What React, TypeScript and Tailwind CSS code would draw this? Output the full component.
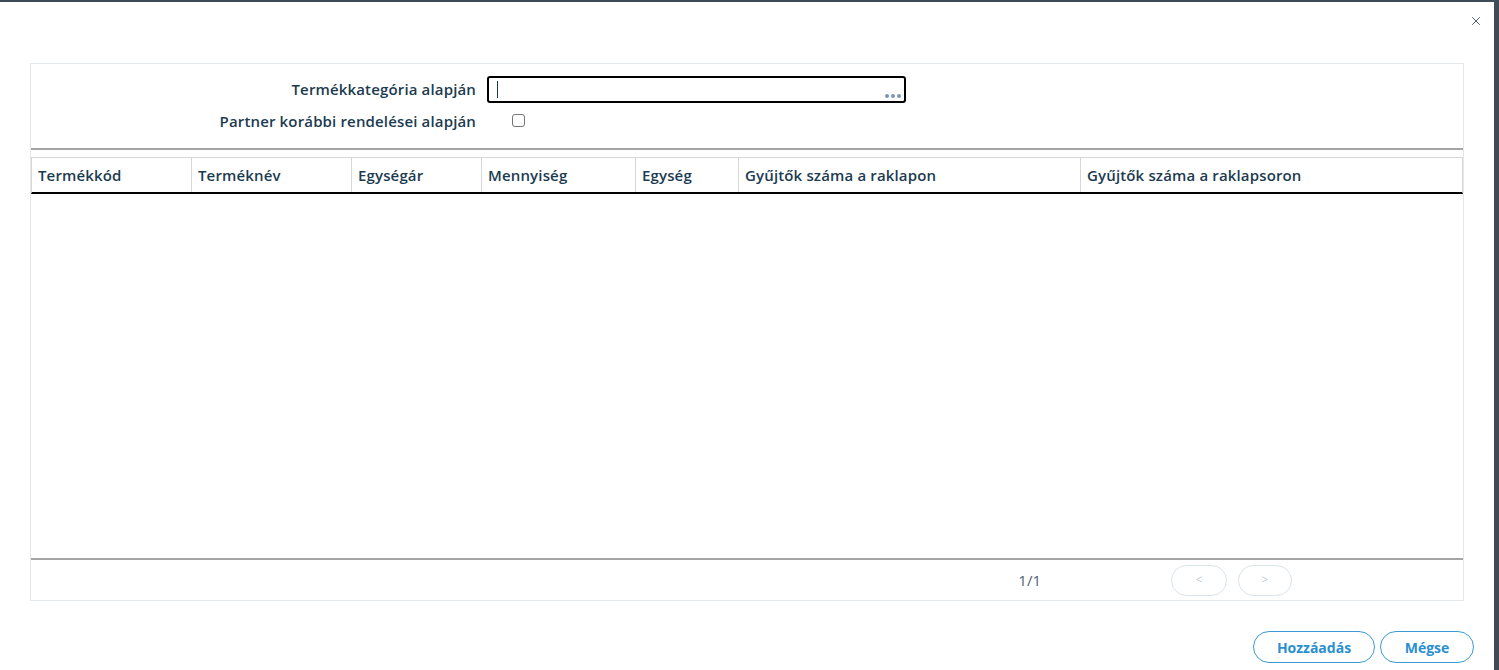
import { X } from 'lucide-react';

const columns = [
  { label: 'Termékkód', width: 'w-[160px]' },
  { label: 'Terméknév', width: 'w-[160px]' },
  { label: 'Egységár', width: 'w-[130px]' },
  { label: 'Mennyiség', width: 'w-[154px]' },
  { label: 'Egység', width: 'w-[103px]' },
  { label: 'Gyűjtők száma a raklapon', width: 'w-[342px]' },
  { label: 'Gyűjtők száma a raklapsoron', width: 'flex-1' },
];

export default function App() {
  return (
    <div className="flex h-[670px] w-[1499px] bg-[#3e4d55] pt-[2px] font-['Open_Sans',sans-serif]">
      <div className="relative flex h-[668px] w-[1494px] flex-col bg-white">
        {/* close */}
        <button className="absolute right-[11px] top-[12px] text-[#3e5566]">
          <X size={14} strokeWidth={1.6} />
        </button>

        {/* panel */}
        <div className="mx-[30px] mt-[61px] flex h-[538px] flex-col border border-[#e3e8ec]">
          {/* filter form */}
          <div className="grid h-[84px] grid-cols-[445px_1fr] content-start gap-x-[11px] pt-[12px] text-[15px] font-semibold tracking-[0.15px] text-[#1c3b50]">
            <div className="flex h-[27px] items-center justify-end">Termékkategória alapján</div>
            <div className="relative h-[27px] w-[419px] rounded-[3px] border-2 border-black">
              <span className="absolute left-[8px] top-[3px] h-[17px] w-px bg-[#1c3b50]" />
              <span className="absolute bottom-[3px] right-[3px] flex gap-[2px]">
                <span className="h-[4px] w-[4px] rounded-full bg-[#7d97b3]" />
                <span className="h-[4px] w-[4px] rounded-full bg-[#7d97b3]" />
                <span className="h-[4px] w-[4px] rounded-full bg-[#7d97b3]" />
              </span>
            </div>
            <div className="mt-[5px] flex h-[27px] items-center justify-end">
              Partner korábbi rendelései alapján
            </div>
            <div className="mt-[5px] flex h-[27px] items-center pl-[25px]">
              <span className="mb-[2px] h-[13px] w-[13px] rounded-[3px] border border-[#767676] bg-white" />
            </div>
          </div>

          <div className="border-b-2 border-[#a4a4a4]" />

          {/* table */}
          <div className="flex-1 pt-[7px]">
            <div className="flex h-[37px] border-l border-r border-t border-b-2 border-[#d6d6d6] border-b-black">
              {columns.map((col, i) => (
                <div
                  key={col.label}
                  className={`${col.width} flex items-center pl-[6px] text-[15px] font-semibold tracking-[0.15px] text-[#1c3b50] ${
                    i < columns.length - 1 ? 'border-r border-[#d6d6d6]' : ''
                  }`}
                >
                  {col.label}
                </div>
              ))}
            </div>
          </div>

          <div className="border-t-2 border-[#a4a4a4]" />

          {/* pager */}
          <div className="flex h-[40px] items-center justify-end pr-[171px]">
            <span className="mr-[130px] text-[15px] text-[#4d6372]">1/1</span>
            <button className="flex h-[31px] w-[56px] items-center justify-center rounded-full border border-[#d9e3ea] text-[12px] text-[#c3ccd3]">
              &lt;
            </button>
            <button className="ml-[11px] flex h-[31px] w-[54px] items-center justify-center rounded-full border border-[#d9e3ea] text-[12px] text-[#c3ccd3]">
              &gt;
            </button>
          </div>
        </div>

        {/* actions */}
        <div className="mt-[30px] flex justify-end gap-[5px] pr-[20px]">
          <button className="h-[32px] w-[122px] rounded-full border border-[#3b9ad5] text-[14px] font-bold text-[#2a8fcf]">
            Hozzáadás
          </button>
          <button className="h-[32px] w-[94px] rounded-full border border-[#3b9ad5] text-[14px] font-bold text-[#2a8fcf]">
            Mégse
          </button>
        </div>
      </div>
    </div>
  );
}
